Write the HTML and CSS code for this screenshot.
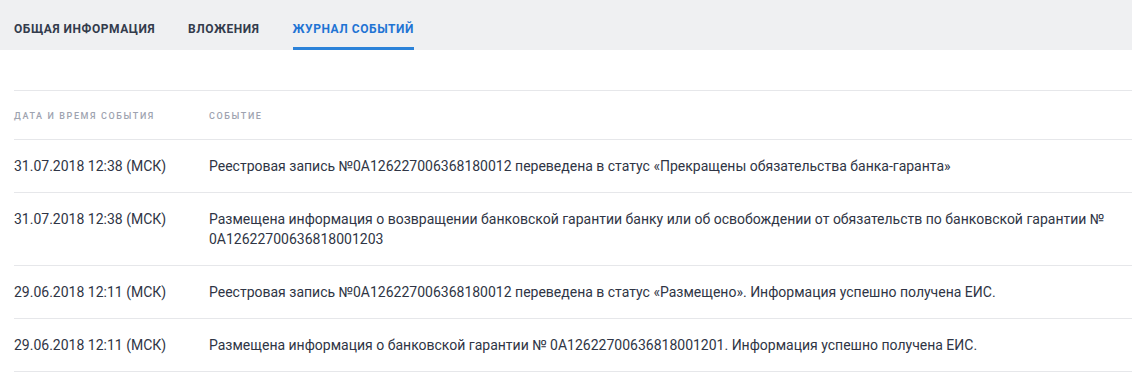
FILE: index.html
```html
<!doctype html>
<html lang="ru">
<head>
    <meta charset="utf-8">
    <title>Журнал событий</title>
    <link rel="stylesheet" href="styles.css">
</head>
<body>
<div class="content">

    <!--  вкладки  -->
    <div class="tabs">
        <a class="tab" href="#">Общая информация</a>
        <a class="tab" href="#">Вложения</a>
        <a class="tab active" href="#">Журнал событий</a>
    </div>

    <!--  журнал  -->
    <div class="journal">
        <table class="events">
            <thead>
            <tr>
                <th class="colDate">Дата и время события</th>
                <th>Событие</th>
            </tr>
            </thead>
            <tbody>
            <tr>
                <td>31.07.2018 12:38 (МСК)</td>
                <td>Реестровая запись №0A126227006368180012 переведена в статус «Прекращены обязательства банка-гаранта»</td>
            </tr>
            <tr>
                <td>31.07.2018 12:38 (МСК)</td>
                <td>Размещена информация о возвращении банковской гарантии банку или об освобождении от обязательств по банковской гарантии № 0A12622700636818001203</td>
            </tr>
            <tr>
                <td>29.06.2018 12:11 (МСК)</td>
                <td>Реестровая запись №0A126227006368180012 переведена в статус «Размещено». Информация успешно получена ЕИС.</td>
            </tr>
            <tr>
                <td>29.06.2018 12:11 (МСК)</td>
                <td>Размещена информация о банковской гарантии № 0A12622700636818001201. Информация успешно получена ЕИС.</td>
            </tr>
            </tbody>
        </table>
    </div>
</div>
</body>
</html>
```

FILE: styles.css
```css
* {
    margin: 0;
    padding: 0;
}

a {
    text-decoration: none;
}

html, body {
    background: #fff;
    font-family: Roboto, "Noto Sans", sans-serif;
    font-size: 14px;
    color: #2f3545;
}

.tabs {
    height: 50px;
    background: #eff0f2;
    padding-left: 14px;
    display: flex;
    gap: 33px;
    box-sizing: border-box;
}

.tabs .tab {
    display: block;
    height: 50px;
    line-height: 58px;
    box-sizing: border-box;
    border-bottom: 3px solid transparent;
    font-size: 12px;
    font-weight: bold;
    text-transform: uppercase;
    letter-spacing: 0.55px;
    color: #333b4c;
}

.tabs .tab.active {
    color: #1f74d4;
    border-bottom-color: #2b82d9;
}

.journal {
    padding: 40px 0 0 14px;
}

.events {
    width: 100%;
    border-collapse: collapse;
    border-top: 1px solid #e6e7ea;
}

.events th {
    height: 47px;
    text-align: left;
    font-size: 9px;
    font-weight: 500;
    letter-spacing: 1.6px;
    text-transform: uppercase;
    color: #9ea3b0;
    border-bottom: 1px solid #e6e7ea;
    vertical-align: middle;
    padding-top: 1px;
}

.events .colDate {
    width: 195px;
}

.events td {
    padding: 16px 24px 16px 0;
    line-height: 20px;
    vertical-align: top;
    border-bottom: 1px solid #e6e7ea;
}
```
